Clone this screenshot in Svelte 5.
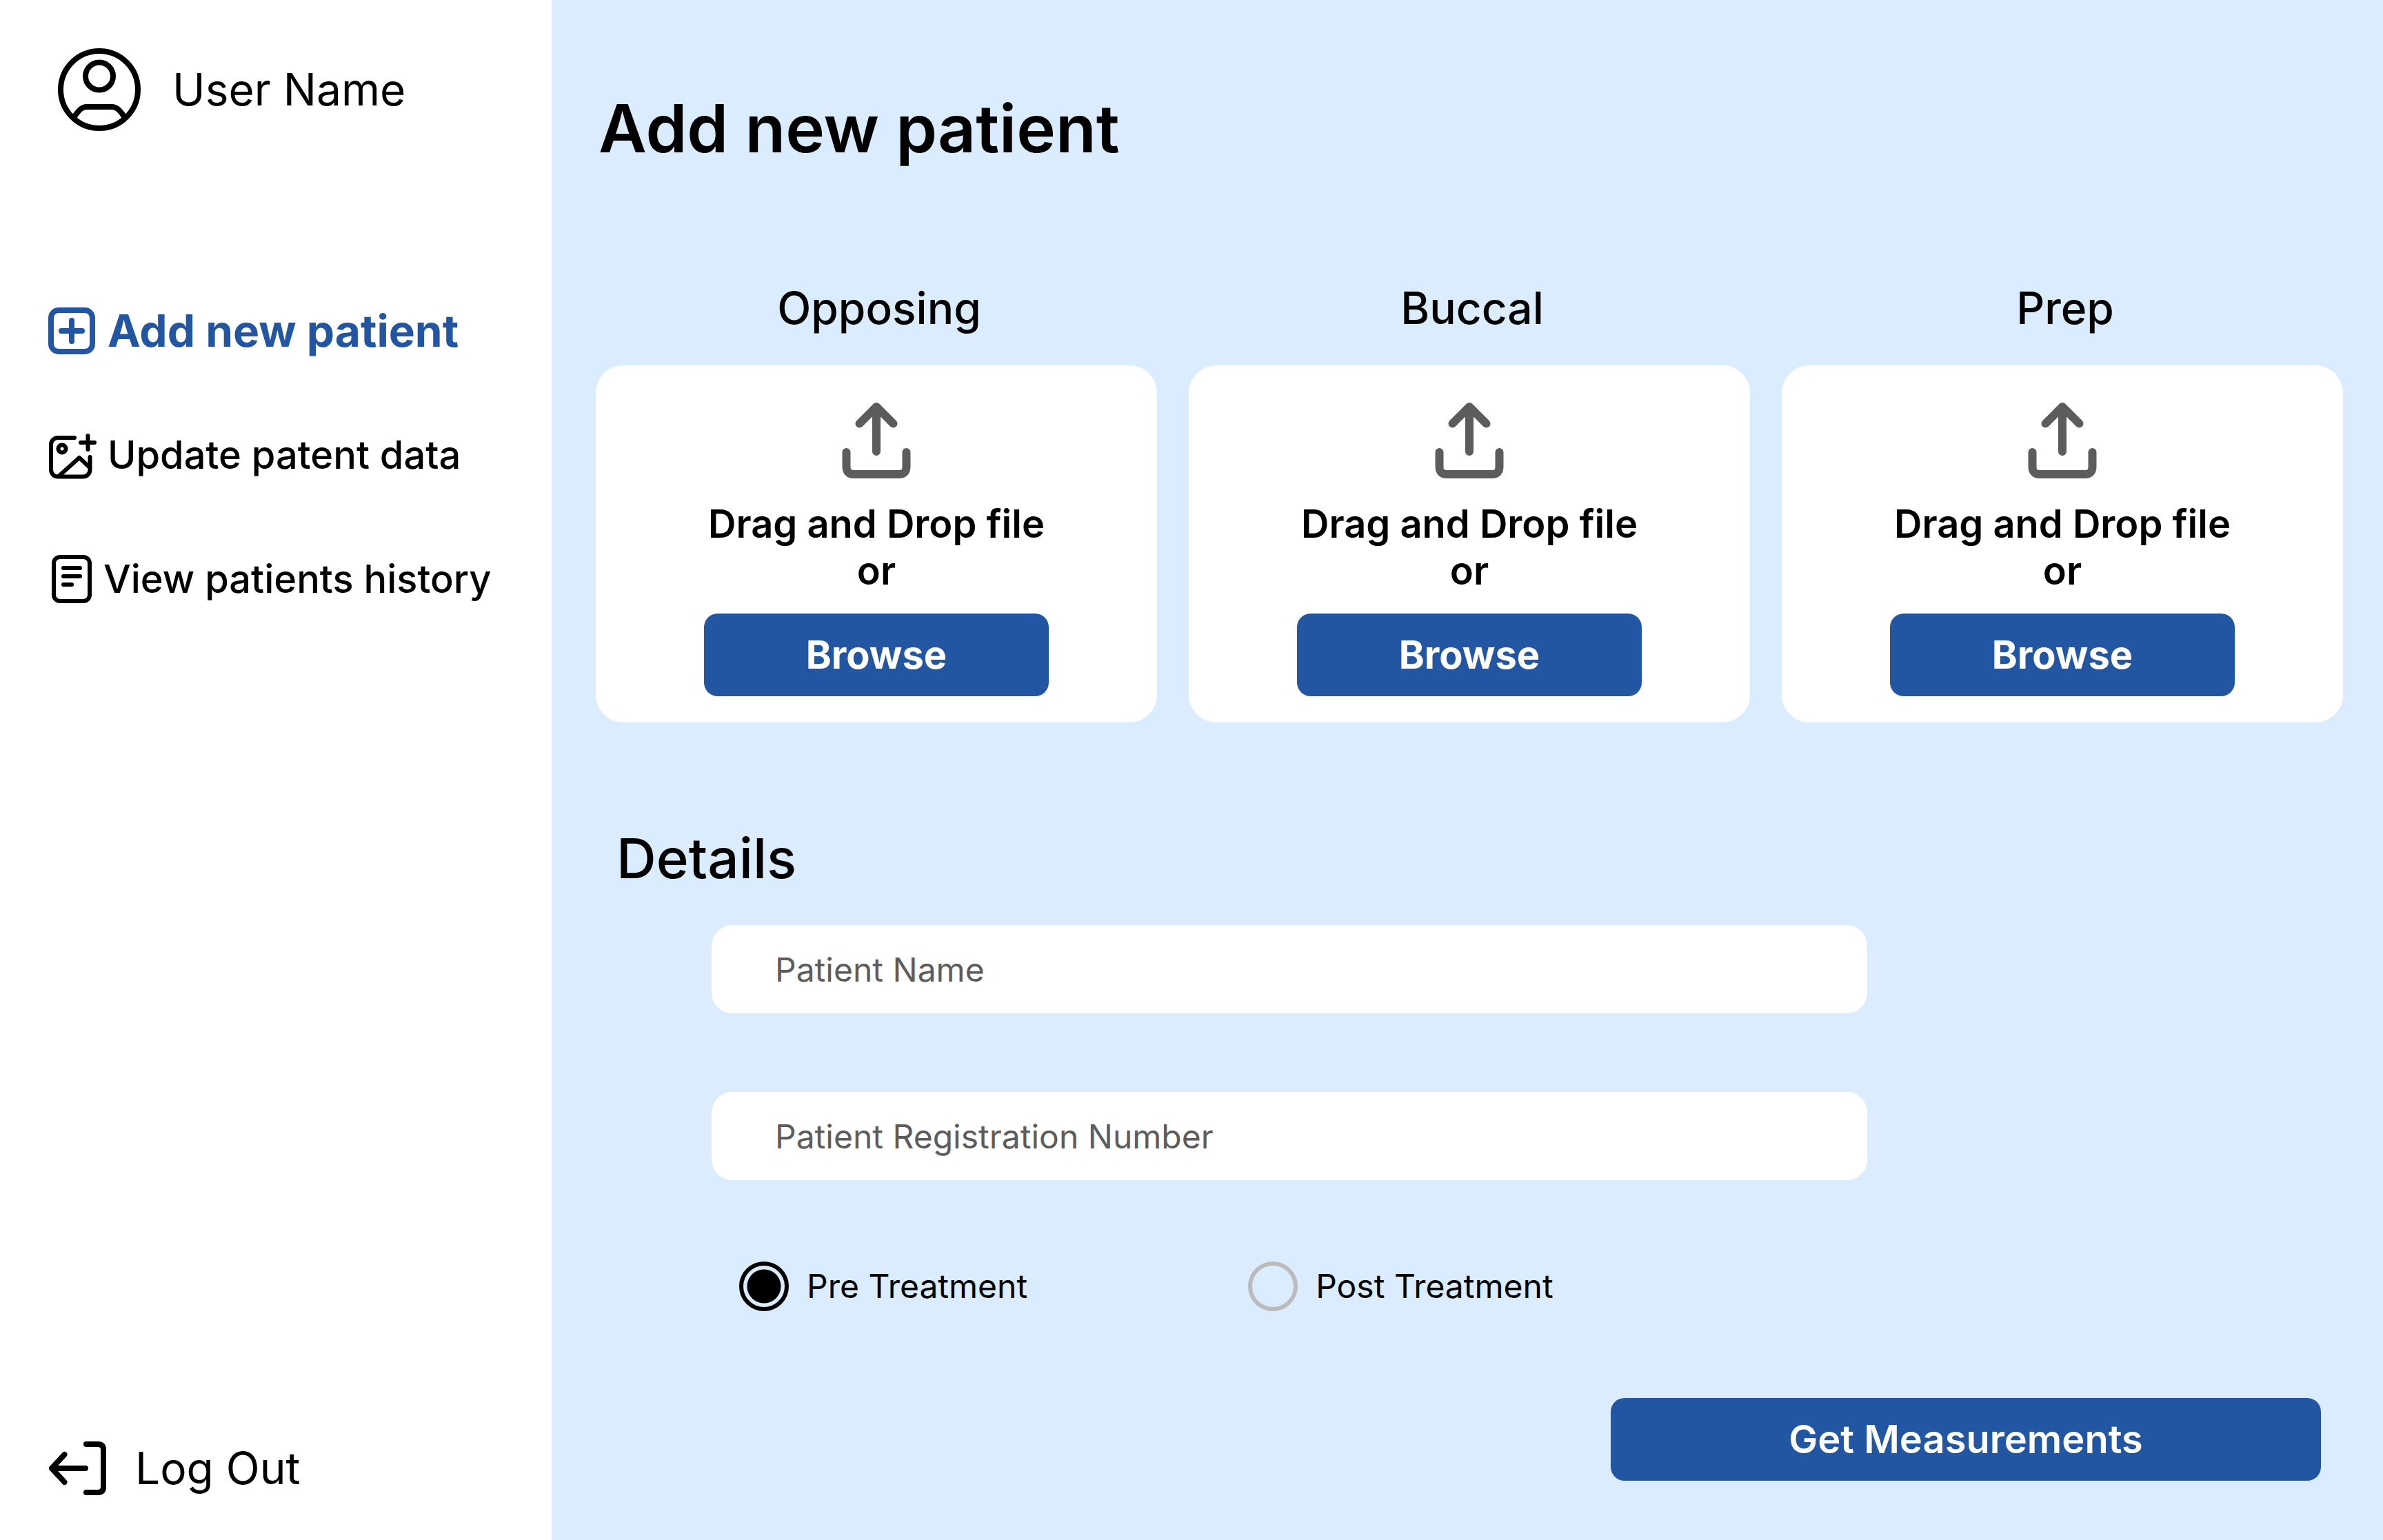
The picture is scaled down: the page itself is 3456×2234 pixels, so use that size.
<script>
  const scans = ['Opposing', 'Buccal', 'Prep'];
  let treatment = $state('pre');
  let patientName = $state('');
  let registration = $state('');
</script>

<div class="page">
  <aside class="sidebar">
    <div class="user">
      <svg class="avatar" viewBox="0 0 120 120" aria-hidden="true">
        <circle cx="60" cy="60" r="56" />
        <circle cx="60" cy="40.500" r="20" />
        <path d="M22 102C28 93 33 85 42 85H78C87 85 92 93 98 102" />
      </svg>
      <span>User Name</span>
    </div>

    <nav class="nav" aria-label="Main">
      <a class="item active" href="#add" aria-current="page">
        <svg class="icon bold" viewBox="0 0 72 72" aria-hidden="true">
          <rect x="6" y="6" width="60" height="60" rx="11" />
          <path d="M36 21V51M21 36H51" />
        </svg>
        <span>Add new patient</span>
      </a>
      <a class="item" href="#update">
        <svg class="icon" viewBox="0 0 72 72" aria-hidden="true">
          <path d="M40 11H16A10 10 0 0 0 6 21V57.500A10 10 0 0 0 16 67.500H52.500A10 10 0 0 0 62.500 57.500V39" />
          <path d="M59.500 8V28M49 18H69" />
          <circle cx="22" cy="27" r="5.500" />
          <path d="M18 66L47 40L62 54" />
        </svg>
        <span>Update patent data</span>
      </a>
      <a class="item" href="#history">
        <svg class="icon narrow" viewBox="0 0 66 72" aria-hidden="true">
          <rect x="10" y="4" width="52" height="64" rx="9" />
          <path d="M24 20H48M24 32H48M24 44H36" />
        </svg>
        <span>View patients history</span>
      </a>
    </nav>

    <a class="logout" href="#logout">
      <svg class="exit" viewBox="0 0 88 80" aria-hidden="true">
        <path d="M57 5H74Q82 5 82 13V67Q82 75 74 75H57" />
        <path d="M56 40H7M25.500 20L7 40L25.500 60" />
      </svg>
      <span>Log Out</span>
    </a>
  </aside>

  <main class="main">
    <h1>Add new patient</h1>

    <div class="scans">
      {#each scans as scan}
        <section class="scan">
          <h2>{scan}</h2>
          <div class="drop">
            <svg class="upload" viewBox="0 0 100 110" aria-hidden="true">
              <path d="M50 71V6M25.500 30.500L50 6L74.500 30.500" />
              <path d="M6.500 72V93Q6.500 104 17.500 104H82.500Q93.500 104 93.500 93V72" />
            </svg>
            <p>Drag and Drop file<br />or</p>
            <button type="button" class="button browse" aria-label="Browse {scan} file">Browse</button>
          </div>
        </section>
      {/each}
    </div>

    <form class="details" onsubmit={(e) => e.preventDefault()}>
      <h2>Details</h2>
      <div class="fields">
        <input type="text" placeholder="Patient Name" aria-label="Patient Name" bind:value={patientName} />
        <input type="text" placeholder="Patient Registration Number" aria-label="Patient Registration Number" bind:value={registration} />
      </div>
      <div class="treatment" role="radiogroup" aria-label="Treatment stage">
        <label><input type="radio" name="treatment" value="pre" bind:group={treatment} />Pre Treatment</label>
        <label><input type="radio" name="treatment" value="post" bind:group={treatment} />Post Treatment</label>
      </div>
      <button type="submit" class="button submit">Get Measurements</button>
    </form>
  </main>
</div>

<style>
  :global(body) {
    margin: 0;
  }

  .page {
    --blue: #2256a2;
    --gray: #5c5c5c;
    display: grid;
    grid-template-columns: 800px 1fr;
    min-height: 100vh;
    background: #dbecff;
    color: #000;
    font-family: Inter, 'Liberation Sans', sans-serif;
    font-weight: 500;
  }

  .page * {
    box-sizing: border-box;
  }

  h1,
  h2,
  p {
    margin: 0;
  }

  a {
    color: inherit;
    text-decoration: none;
  }

  svg {
    flex: none;
    fill: none;
    stroke: currentColor;
    stroke-width: 8;
    stroke-linecap: round;
    stroke-linejoin: round;
  }

  .sidebar {
    display: flex;
    flex-direction: column;
    padding: 70px 68px 64px;
    background: #fff;
  }

  .user {
    display: flex;
    align-items: center;
    gap: 46px;
    padding-left: 16px;
    font-size: 64px;
    font-weight: 400;
    line-height: 80px;
  }

  .avatar {
    width: 120px;
    height: 120px;
    stroke-linecap: butt;
  }

  .nav {
    display: flex;
    flex-direction: column;
    gap: 100px;
    margin-top: 250px;
  }

  .item {
    display: flex;
    align-items: center;
    gap: 16px;
    height: 80px;
    font-size: 56px;
    line-height: 68px;
    white-space: nowrap;
  }

  .active {
    color: var(--blue);
    font-size: 64px;
    font-weight: 700;
  }

  .icon {
    width: 72px;
    height: 72px;
    stroke-width: 6;
  }

  .bold {
    stroke-width: 8;
  }

  .narrow {
    width: 66px;
  }

  .logout {
    display: flex;
    align-items: center;
    gap: 40px;
    margin-top: auto;
    font-size: 64px;
    font-weight: 400;
    line-height: 80px;
  }

  .exit {
    width: 88px;
    height: 80px;
  }

  .main {
    padding: 128px 58px 86px 64px;
  }

  h1 {
    padding-left: 4px;
    font-size: 96px;
    font-weight: 600;
    line-height: 116px;
  }

  .scans {
    display: grid;
    grid-template-columns: repeat(3, 1fr);
    gap: 46px;
    margin-top: 164px;
  }

  .scan h2 {
    padding-left: 8px;
    font-size: 64px;
    font-weight: 500;
    line-height: 78px;
    text-align: center;
  }

  .drop {
    display: flex;
    flex-direction: column;
    align-items: center;
    margin-top: 44px;
    padding: 54px 0 38px;
    border-radius: 40px;
    background: #fff;
  }

  .upload {
    width: 100px;
    height: 110px;
    color: var(--gray);
    stroke-width: 12;
  }

  .drop p {
    margin-top: 32px;
    font-size: 56px;
    font-weight: 600;
    line-height: 68px;
    text-align: center;
  }

  .button {
    height: 120px;
    padding: 0;
    border: 0;
    border-radius: 20px;
    background: var(--blue);
    color: #fff;
    font-family: inherit;
    font-size: 56px;
    font-weight: 600;
    line-height: 68px;
    cursor: pointer;
  }

  .browse {
    width: 500px;
    margin-top: 28px;
    font-weight: 700;
  }

  .details {
    display: flex;
    flex-direction: column;
    margin-top: 148px;
  }

  .details h2 {
    padding-left: 30px;
    font-size: 80px;
    font-weight: 500;
    line-height: 98px;
  }

  .fields {
    display: flex;
    flex-direction: column;
    gap: 114px;
    max-width: 1844px;
    margin-top: 48px;
    padding-left: 168px;
  }

  .fields input {
    width: 100%;
    height: 128px;
    padding: 0 92px;
    border: 0;
    border-radius: 30px;
    background: #fff;
    color: #000;
    font-family: inherit;
    font-size: 48px;
    font-weight: 400;
  }

  .fields input::placeholder {
    color: var(--gray);
    opacity: 1;
  }

  .treatment {
    display: flex;
    gap: 320px;
    margin-top: 118px;
    padding-left: 208px;
  }

  .treatment label {
    display: flex;
    align-items: center;
    gap: 26px;
    font-size: 48px;
    font-weight: 400;
    line-height: 58px;
  }

  .treatment input {
    appearance: none;
    width: 72px;
    height: 72px;
    margin: 0;
    padding: 6px;
    border: 6px solid #bbb;
    border-radius: 50%;
  }

  .treatment input:checked {
    border-color: #000;
    background: radial-gradient(circle, #000 24px, transparent 25px);
  }

  .submit {
    align-self: flex-end;
    width: 1030px;
    margin-top: 126px;
    margin-right: 32px;
  }
</style>
